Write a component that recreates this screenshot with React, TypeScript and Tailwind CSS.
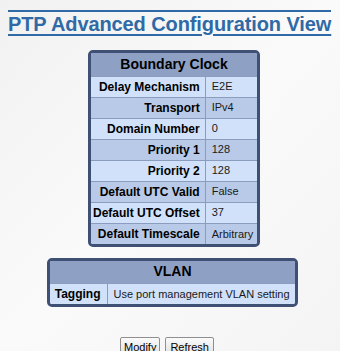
import React from "react";

const rows: [string, string][] = [
  ["Delay Mechanism", "E2E"],
  ["Transport", "IPv4"],
  ["Domain Number", "0"],
  ["Priority 1", "128"],
  ["Priority 2", "128"],
  ["Default UTC Valid", "False"],
  ["Default UTC Offset", "37"],
  ["Default Timescale", "Arbitrary"],
];

export default function App() {
  return (
    <div
      className="w-[340px] h-[351px] overflow-hidden bg-gradient-to-br from-[#f1f1f1] via-[#fafafa] to-[#f4f4f4] text-black"
      style={{ fontFamily: '"Liberation Sans", Arial, sans-serif' }}
    >
      <div className="pt-[10px] pl-[8px] flex">
        <div className="border-t-2 border-[#2f6aa6] text-[20px] leading-[20px] font-bold text-[#2f6aa6] underline decoration-2 underline-offset-[3px] pt-[2px] pb-[2px] tracking-[-0.1px]">
          PTP Advanced Configuration View
        </div>
      </div>

      <div className="ml-[88px] mt-[14px] w-[172px] border-[3px] border-[#3e5074] rounded-[5px] overflow-hidden">
        <table className="w-full border-collapse text-[12px]">
          <thead>
            <tr>
              <th
                colSpan={2}
                className="h-[23px] bg-[#8ea1c5] text-[14px] font-bold text-center p-0"
              >
                Boundary Clock
              </th>
            </tr>
          </thead>
          <tbody>
            {rows.map(([k, v], i) => (
              <tr key={k} className={i % 2 === 0 ? "bg-[#d0e1f9]" : "bg-[#b8cae7]"}>
                <td className="h-[21px] border-t border-[#8b9dbf] text-right font-bold pr-[5px] pl-[2px] whitespace-nowrap w-[110px]">
                  {k}
                </td>
                <td className="h-[21px] border-t border-l border-[#8b9dbf] pl-[6px] pr-[2px] whitespace-nowrap text-[11px] text-[#1a1a1a]">
                  {v}
                </td>
              </tr>
            ))}
          </tbody>
        </table>
      </div>

      <div className="ml-[47px] mt-[11px] w-[251px] border-[3px] border-[#3e5074] rounded-[5px] overflow-hidden">
        <table className="w-full border-collapse text-[12px]">
          <thead>
            <tr>
              <th
                colSpan={2}
                className="h-[22px] bg-[#8ea1c5] text-[14px] font-bold text-center p-0"
              >
                VLAN
              </th>
            </tr>
          </thead>
          <tbody>
            <tr className="bg-[#d0e1f9]">
              <td className="h-[21px] border-t border-[#8b9dbf] text-right font-bold pr-[6px] w-[57px] whitespace-nowrap">
                Tagging
              </td>
              <td className="h-[21px] border-t border-l border-[#8b9dbf] pl-[6px] whitespace-nowrap text-[11px] text-[#1a1a1a]">
                Use port management VLAN setting
              </td>
            </tr>
          </tbody>
        </table>
      </div>

      <div className="mt-[30px] ml-[120px] flex gap-[5px]">
        <button className="h-[20px] px-[3px] text-[11px] leading-[16px] border border-[#8f8f8f] rounded-[2px] bg-gradient-to-b from-[#fbfbfb] to-[#dedede]">
          Modify
        </button>
        <button className="h-[20px] px-[4px] text-[11px] leading-[16px] border border-[#8f8f8f] rounded-[2px] bg-gradient-to-b from-[#fbfbfb] to-[#dedede]">
          Refresh
        </button>
      </div>
    </div>
  );
}
